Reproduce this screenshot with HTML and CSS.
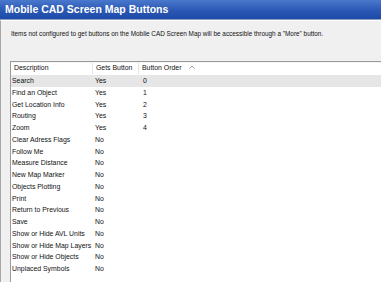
FILE: index.html
```html
<!DOCTYPE html>
<html lang="en">
<head>
    <meta charset="UTF-8">
    <title>Mobile CAD Screen Map Buttons</title>
    <link rel="stylesheet" href="styles.css">
</head>
<body>
    <div class="titlebar">Mobile CAD Screen Map Buttons</div>

    <div class="panel">
        <div class="note">Items not configured to get buttons on the Mobile CAD Screen Map will be accessible through a "More" button.</div>

        <div class="list">
            <div class="row head">
                <div class="cell c1">Description</div>
                <div class="cell c2">Gets Button</div>
                <div class="cell c3">Button Order
                    <svg class="sort" width="6" height="4" viewBox="0 0 6 4"><path d="M0.5 3.5 L3 1 L5.5 3.5" fill="none" stroke="#a0a0a0" stroke-width="1"/></svg>
                </div>
            </div>
            <div class="row selected"><div class="cell c1">Search</div><div class="cell c2">Yes</div><div class="cell c3">0</div></div>
            <div class="row"><div class="cell c1">Find an Object</div><div class="cell c2">Yes</div><div class="cell c3">1</div></div>
            <div class="row"><div class="cell c1">Get Location Info</div><div class="cell c2">Yes</div><div class="cell c3">2</div></div>
            <div class="row"><div class="cell c1">Routing</div><div class="cell c2">Yes</div><div class="cell c3">3</div></div>
            <div class="row"><div class="cell c1">Zoom</div><div class="cell c2">Yes</div><div class="cell c3">4</div></div>
            <div class="row"><div class="cell c1">Clear Adress Flags</div><div class="cell c2">No</div><div class="cell c3"></div></div>
            <div class="row"><div class="cell c1">Follow Me</div><div class="cell c2">No</div><div class="cell c3"></div></div>
            <div class="row"><div class="cell c1">Measure Distance</div><div class="cell c2">No</div><div class="cell c3"></div></div>
            <div class="row"><div class="cell c1">New Map Marker</div><div class="cell c2">No</div><div class="cell c3"></div></div>
            <div class="row"><div class="cell c1">Objects Plotting</div><div class="cell c2">No</div><div class="cell c3"></div></div>
            <div class="row"><div class="cell c1">Print</div><div class="cell c2">No</div><div class="cell c3"></div></div>
            <div class="row"><div class="cell c1">Return to Previous</div><div class="cell c2">No</div><div class="cell c3"></div></div>
            <div class="row"><div class="cell c1">Save</div><div class="cell c2">No</div><div class="cell c3"></div></div>
            <div class="row"><div class="cell c1">Show or Hide AVL Units</div><div class="cell c2">No</div><div class="cell c3"></div></div>
            <div class="row"><div class="cell c1">Show or Hide Map Layers</div><div class="cell c2">No</div><div class="cell c3"></div></div>
            <div class="row"><div class="cell c1">Show or Hide Objects</div><div class="cell c2">No</div><div class="cell c3"></div></div>
            <div class="row"><div class="cell c1">Unplaced Symbols</div><div class="cell c2">No</div><div class="cell c3"></div></div>
        </div>
    </div>
</body>
</html>
```

FILE: styles.css
```css
body {
    margin: 0;
    font-family: "Liberation Sans", Arial, sans-serif;
    background: #f0f0f0;
    height: 282px;
    overflow: hidden;
}

.titlebar {
    height: 19px;
    line-height: 19px;
    padding-left: 5px;
    background: linear-gradient(#4a78cc 0%, #2a58b4 55%, #1d4aa6 100%);
    color: white;
    font-weight: bold;
    font-size: 10.5px;
    border-bottom: 1px solid #8f9fbf;
}

.panel {
    border-left: 1px solid #a8a8a8;
    border-top: 1px solid #ffffff;
    padding: 9px 0 0 9px;
    height: 252px;
    overflow: hidden;
}

.note {
    font-size: 6.4px;
    color: #111;
    padding-left: 1px;
    height: 31px;
}

.list {
    background: white;
    border-top: 1px solid #9a9a9a;
    border-left: 1px solid #9a9a9a;
    height: 230px;
}

.row {
    display: grid;
    grid-template-columns: 82px 46px 1fr;
    height: 11.75px;
    line-height: 11.75px;
    font-size: 6.9px;
    color: #111;
}

.row.head {
    height: 11px;
    line-height: 9px;
    border-top: 1px solid #f4f4f4;
    padding-bottom: 1px;
}

.row.head .cell {
    padding-left: 3px;
    border-right: 1px solid #e5e5e5;
}

.row.head .c3 {
    border-right: none;
}

.row.selected {
    background: #e6e6e6;
}

.cell {
    padding-left: 1px;
    white-space: nowrap;
    overflow: hidden;
}

.c2 {
    padding-left: 2px;
}

.c3 {
    padding-left: 4px;
}

.sort {
    margin-left: 6px;
    vertical-align: 1px;
}
```
